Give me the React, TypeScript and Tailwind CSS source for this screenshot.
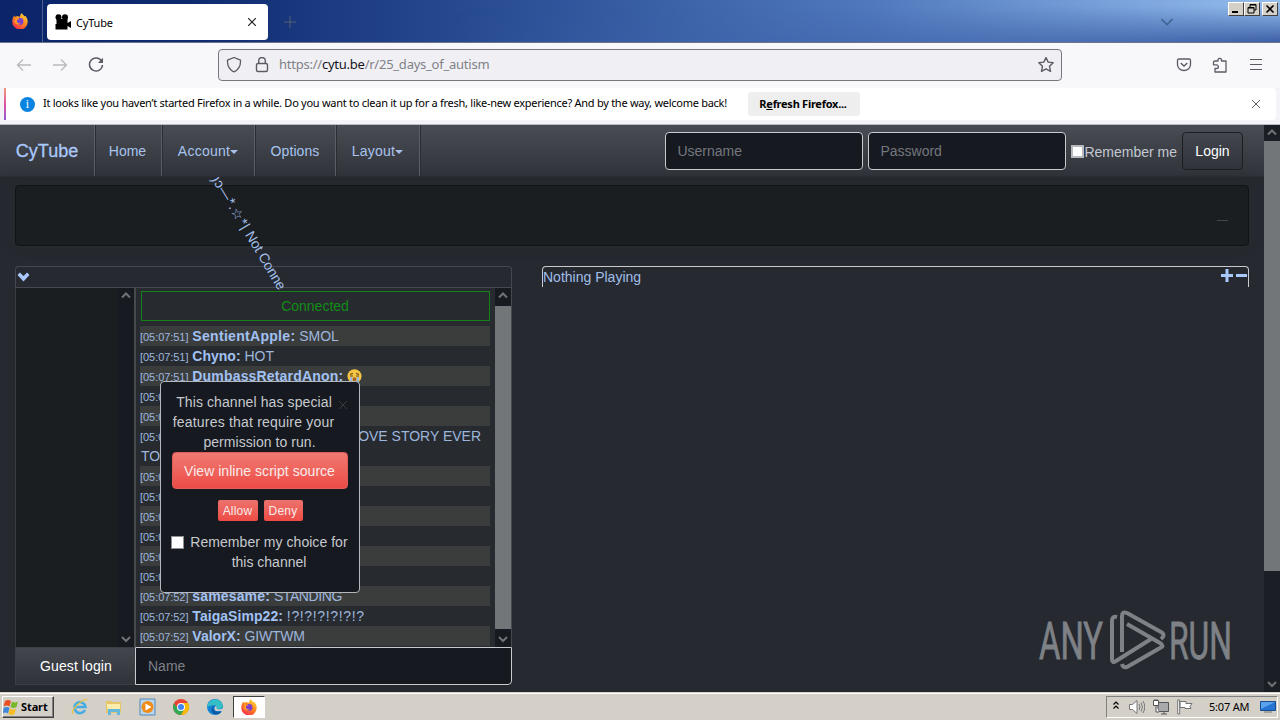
import * as React from "react";
import { type ReactNode } from "react";
import { clsx } from "clsx";

type Message = {
  time: string;
  user?: string;
  text?: ReactNode;
  tall?: boolean;
  className?: string;
};

const messages: Message[] = [
  { time: "05:07:51", user: "SentientApple", text: "SMOL", className: "tracking-[0.3px]" },
  { time: "05:07:51", user: "Chyno", text: "HOT" },
  { time: "05:07:51", user: "DumbassRetardAnon", text: <CryingFace />, className: "tracking-[0.17px]" },
  { time: "05:07:51" },
  { time: "05:07:51" },
  { time: "05:07:51", tall: true },
  { time: "05:07:52" },
  { time: "05:07:52" },
  { time: "05:07:52" },
  { time: "05:07:52" },
  { time: "05:07:52" },
  { time: "05:07:52" },
  {
    time: "05:07:52",
    user: "samesame",
    text: <span className="tracking-[-0.4px]">STANDING</span>,
    className: "tracking-[0.15px]",
  },
  {
    time: "05:07:52",
    user: "TaigaSimp22",
    text: <span className="tracking-[0.65px]">!?!?!?!?!?!?</span>,
    className: "tracking-[0.05px]",
  },
  { time: "05:07:52", user: "ValorX", text: <span className="tracking-[-0.2px]">GIWTWM</span> },
];

function CryingFace() {
  return (
    <svg className="inline-block h-[15px] w-[15px] align-[-3px]" viewBox="0 0 15 15">
      <circle cx="7.5" cy="7.2" r="7" fill="#f6c544" />
      <path d="M3 5.5l3-1.3M12 5.5L9 4.200M3 7h3M9 7h3" stroke="#6b4a12" strokeWidth="1.100" />
      <ellipse cx="7.5" cy="10.500" rx="1.800" ry="2.200" fill="#a8641c" />
      <path d="M3.200 8h2v6h-2zM9.800 8h2v6h-2z" fill="#8fb7ea" />
    </svg>
  );
}

function FirefoxIcon({ className }: { className?: string }) {
  return (
    <svg className={className} viewBox="0 0 16 16">
      <defs>
        <linearGradient id="fx" x1="0.8" y1="0" x2="0.2" y2="1">
          <stop offset="0" stopColor="#ffdc3e" />
          <stop offset="0.45" stopColor="#ff8a1f" />
          <stop offset="1" stopColor="#f5264f" />
        </linearGradient>
      </defs>
      <path
        d="M10 0c.3 1.700 1.600 2.300 2.700 3.300.3-.1.500-.2.700-.2 1.400 1.600 2.500 4 2.300 6A7.700 7.700 0 0 1 .3 8.600C.2 6 1.200 4 2.300 2.400l.7 1.500 2-.8C6.500 3.200 8 4 8 4 8 2.500 8.700 1 10 0z"
        fill="url(#fx)"
      />
      <circle cx="8" cy="8.500" r="3.400" fill="#7b3fd0" />
      <path d="M3.500 5.500c1.500-.7 3-.3 4 .8-1.800.1-2.500.7-2.600 1.800 0 1.800 2 3 4.400 2.100-2 2.300-6.300 1.500-6.800-1.700z" fill="#ff9a27" />
    </svg>
  );
}

function NavItem({ children, className, caret }: { children: ReactNode; className?: string; caret?: boolean }) {
  return (
    <a
      className={clsx(
        "flex h-full items-center justify-center border-r border-[#5b5e66] shadow-[1px_0_0_#2b2d33]",
        className,
      )}
    >
      {children}
      {caret && (
        <span className="mt-0.5 h-0 w-0 border-x-4 border-t-4 border-x-transparent border-t-[#a5bfe9]" />
      )}
    </a>
  );
}

function Arrow({ up, className }: { up?: boolean; className?: string }) {
  return (
    <svg className={clsx("h-4 w-4", className)} viewBox="0 0 16 16" fill="none">
      <path d={up ? "M4 9.500L8 5.500l4 4" : "M4 6l4 4 4-4"} stroke="#707276" strokeWidth="2" />
    </svg>
  );
}

function TitleBar() {
  return (
    <div className="relative flex h-[43px] shrink-0 border-b border-[#6d7489] bg-[linear-gradient(90deg,#0b246a_0%,#0f2b70_15%,#2c4f95_40%,#5079bd_68%,#80a8df_90%,#94bdec_100%)]">
      <div className="absolute inset-0 bg-[linear-gradient(90deg,transparent_35%,#3d5fa6_100%)] [mask-image:linear-gradient(180deg,transparent_15%,black_100%)]" />
      <div className="relative flex w-[43px] items-center justify-center border-r border-[#4c5f92]">
        <FirefoxIcon className="mr-0.5 h-4 w-4" />
      </div>
      <div className="relative mt-1 ml-1 flex h-9 w-[221px] items-center rounded bg-white">
        <svg className="ml-2 h-4 w-4" viewBox="0 0 16 16">
          <circle cx="3.500" cy="3.200" r="3" />
          <circle cx="10" cy="3.200" r="3" />
          <path d="M1.500 5h11v4l3.500-2v7l-3.500-2v3.500H.5V10h1z" />
        </svg>
        <span className="ml-[5px] pt-0.5 font-['Noto_Sans',sans-serif] text-[11px] tracking-[-0.2px] text-black">CyTube</span>
        <svg className="ml-auto mr-3 h-2 w-2" viewBox="0 0 8 8">
          <path d="M0 0l8 8M8 0L0 8" stroke="#222" strokeWidth="1.200" />
        </svg>
      </div>
      <svg className="relative mt-4 ml-4 h-3 w-3" viewBox="0 0 12 12">
        <path d="M6 0v12M0 6h12" stroke="#535f72" />
      </svg>
      <svg className="relative mt-[18px] ml-auto mr-[107px] h-2 w-3" viewBox="0 0 12 8" fill="none">
        <path d="M.5 1L6 6.500 11.500 1" stroke="#416494" strokeWidth="1.600" />
      </svg>
      <div className="absolute top-0.5 right-0.5 flex">
        {["min", "restore", "close"].map((name) => (
          <svg
            key={name}
            className={clsx(
              "h-[14px] border border-t-white border-r-[#404040] border-b-[#404040] border-l-white bg-[#d4d0c8]",
              name === "close" ? "ml-0.5 w-4" : "w-4",
            )}
            viewBox="0 0 14 12"
            fill="none"
            stroke="#000"
          >
            {name === "min" && <path d="M3 9h6" strokeWidth="2" />}
            {name === "restore" && <path d="M5 4V1.500h6V7H9M3 4.500h6V10H3zM5 2h6M3 5h6" />}
            {name === "close" && <path d="M3.500 2.500l7 7M10.500 2.500l-7 7" strokeWidth="1.600" />}
          </svg>
        ))}
      </div>
    </div>
  );
}

function Toolbar() {
  return (
    <div className="flex h-[45px] shrink-0 items-center bg-[#f8f8fa] pb-0.5 text-[#5b5b66]">
      <svg className="ml-4 h-4 w-4" viewBox="0 0 16 16" fill="none" stroke="#b9b9be" strokeWidth="1.300">
        <path d="M15 8H1.500M7 2.500L1.500 8 7 13.500" />
      </svg>
      <svg className="ml-5 h-4 w-4" viewBox="0 0 16 16" fill="none" stroke="#b9b9be" strokeWidth="1.300">
        <path d="M1 8h13.500M9 2.500L14.500 8 9 13.500" />
      </svg>
      <svg className="ml-5 h-4 w-4" viewBox="0 0 16 16" fill="none" stroke="currentColor" strokeWidth="1.500">
        <path d="M13.800 4.500A6.500 6.500 0 1 0 14.500 8" />
        <path d="M15 .8V6h-5z" fill="currentColor" stroke="none" />
      </svg>
      <div className="ml-[114px] flex h-8 w-[844px] items-center rounded border border-[#77777d] bg-[#f0f0f4]">
        <svg className="ml-[7px] h-4 w-4" viewBox="0 0 16 16" fill="none" stroke="currentColor" strokeWidth="1.300">
          <path d="M8 .5l6.500 2.700c.3 5-1.500 9.500-6.500 11.700C3 12.700 1.200 8.200 1.500 3.200z" strokeLinejoin="round" />
        </svg>
        <svg className="ml-3 h-4 w-4" viewBox="0 0 16 16" fill="none" stroke="currentColor" strokeWidth="1.400">
          <rect x="2.500" y="6.500" width="11" height="8" rx="1.500" />
          <path d="M4.700 6.500V3.800a3.300 3.300 0 0 1 6.600 0v2.700" />
        </svg>
        <span className="ml-[9px] font-['Noto_Sans',sans-serif] text-[13px] tracking-[-0.24px] text-[#808087]">
          https://<span className="text-[#15141a]">cytu.be</span>/r/25_days_of_autism
        </span>
        <svg className="ml-auto mr-[7px] h-4 w-4" viewBox="0 0 16 16" fill="none" stroke="currentColor" strokeWidth="1.400">
          <path d="M8 .6l2.200 4.500 5 .6-3.700 3.500 1 5.200L8 11.900l-4.500 2.500 1-5.200L.8 5.700l5-.6z" strokeLinejoin="round" />
        </svg>
      </div>
      <svg className="ml-[114px] h-4 w-4" viewBox="0 0 16 16" fill="none" stroke="currentColor" strokeWidth="1.300">
        <path d="M3 2h10q1.500 0 1.500 1.500v4a6.500 6 0 0 1-13 0v-4Q1.500 2 3 2z" />
        <path d="M4.700 6L8 9l3.300-3" />
      </svg>
      <svg className="ml-5 h-4 w-4" viewBox="0 0 16 16" fill="none" stroke="currentColor" strokeWidth="1.300">
        <path d="M6 4V2.500a2 2 0 0 1 3.500 0V4h4.500v11H3v-3.500h1.500a1.800 1.800 0 0 0 0-3.700H1.500V5.500Q1.500 4 3 4z" strokeLinejoin="round" />
      </svg>
      <svg className="ml-5 h-4 w-4" viewBox="0 0 16 16" stroke="currentColor" strokeWidth="1.200">
        <path d="M2 2.500h12M2 7.500h12M2 12.500h12" />
      </svg>
    </div>
  );
}

function InfoBar() {
  return (
    <div className="flex h-[37px] shrink-0 border-b border-[#bcbcc6] bg-[#f4f4f8] pb-1 font-['Noto_Sans',sans-serif] text-[11px] text-black">
      <div className="ml-1 flex w-[1272px] items-center rounded-r bg-white">
        <div className="h-full w-0.5 bg-linear-to-b from-[#f09a80] via-[#e050a0] to-[#9059d0]" />
        <div className="ml-[14px] flex h-[15px] w-[15px] items-center justify-center rounded-full bg-[#0a84e0] font-['Liberation_Serif',serif] text-[12px] text-white">
          i
        </div>
        <span className="ml-2 w-[690px] whitespace-nowrap pb-0.5 tracking-[-0.268px]">
          It looks like you haven’t started Firefox in a while. Do you want to clean it up for a fresh, like-new
          experience? And by the way, welcome back!
        </span>
        <button className="ml-[15px] h-6 w-28 rounded bg-[#eeeeef] pr-0.5 text-[11px] font-bold tracking-[-0.26px]">
          R<u>e</u>fresh Firefox...
        </button>
        <svg className="ml-auto mr-4 h-2 w-2" viewBox="0 0 8 8">
          <path d="M0 0l8 8M8 0L0 8" stroke="#5b5b66" />
        </svg>
      </div>
    </div>
  );
}

function Navbar() {
  return (
    <nav className="flex h-[52px] shrink-0 items-center border-b border-[#2c2e33] bg-linear-to-b from-[#494c54] to-[#303339] text-[#a8c4ee]">
      <NavItem className="w-[95px] text-[18px] text-[#a9c8fb] [-webkit-text-stroke:0.3px_#a9c8fb]">CyTube</NavItem>
      <NavItem className="w-[67px] pr-px">Home</NavItem>
      <NavItem className="w-[93px] tracking-[0.25px]" caret>Account</NavItem>
      <NavItem className="w-[81px] tracking-[0.1px]">Options</NavItem>
      <NavItem className="w-[84px] tracking-[0.25px]" caret>Layout</NavItem>
      <div className="ml-auto mr-[21px] flex items-center">
        <div className="flex h-[38px] w-[198px] items-center rounded border border-[#c8cacf] bg-[#161920] px-[11px] text-[#74777e]">
          Username
        </div>
        <div className="ml-[5px] flex h-[38px] w-[198px] items-center rounded border border-[#c8cacf] bg-[#161920] px-[11px] text-[#74777e]">
          Password
        </div>
        <span className="mt-0.5 ml-[5px] h-[13px] w-[13px] border-2 border-[#b8b9be] bg-white" />
        <span className="mt-0.5 text-[#c3c8d2]">Remember me</span>
        <button className="ml-[5px] h-[38px] w-[61px] rounded border border-[#1b1d21] bg-linear-to-b from-[#43464e] to-[#303339] text-white">
          Login
        </button>
      </div>
    </nav>
  );
}

function ChatRow({ message, index }: { message: Message; index: number }) {
  return (
    <div className={clsx("w-[350px] shrink-0 leading-5", message.tall ? "h-10" : "h-5", index % 2 === 0 && "bg-[#3b3d3d]")}>
      <span className="text-[11px] leading-none tracking-[-0.05px]">[{message.time}]</span>{" "}
      {message.user && <strong className={clsx("text-[#a2c1f3]", message.className)}>{message.user}:</strong>}{" "}
      {message.text}
      {message.tall && (
        <>
          <span className="ml-[158px]">LOVE STORY EVER</span>
          <br />
          <span className="ml-px">TOLD</span>
        </>
      )}
    </div>
  );
}

function Chat() {
  return (
    <section className="w-[497px]">
      <div className="flex h-[21px] items-center rounded-t border border-b-0 border-[#44474f] pl-px">
        <svg className="h-3 w-[13px]" viewBox="0 0 12 12">
          <path d="M0 4l2.400-2.500L6 5l3.600-3.500L12 4l-6 6.500z" fill="#a9c8fb" />
        </svg>
      </div>
      <div className="flex h-[360px] border-t border-[#46494f]">
        <div className="flex w-[119px] border-l border-[#383b40] bg-[#1b1e20]">
          <div className="ml-auto flex w-4 flex-col justify-between bg-[#171a20]">
            <Arrow up />
            <Arrow />
          </div>
        </div>
        <div className="flex w-[361px] flex-col overflow-hidden border-l-2 border-[#47494d] bg-[#272b2f] pt-[3px] pl-1">
          <div className="mb-[5px] ml-px flex h-[30px] w-[349px] shrink-0 items-center justify-center border border-[#148018] pr-px text-[#118d15]">
            Connected
          </div>
          {messages.map((message, index) => (
            <ChatRow key={index} message={message} index={index} />
          ))}
        </div>
        <div className="flex w-4 flex-col bg-[#171a20]">
          <Arrow up />
          <div className="my-0.5 flex-1 bg-[#737679]" />
          <Arrow />
        </div>
        <div className="w-px bg-[#46494f]" />
      </div>
      <div className="flex h-[38px]">
        <button className="w-[120px] border border-[#3b3e45] bg-linear-to-b from-[#43464e] to-[#303339] pl-0.5 tracking-[0.1px] text-white">
          Guest login
        </button>
        <div className="flex flex-1 items-center rounded-br border border-[#c8cacf] bg-[#161920] pl-3 text-[#7d8087]">Name</div>
      </div>
    </section>
  );
}

function PermissionDialog() {
  return (
    <div className="absolute top-[256px] left-[160px] flex h-[212px] w-[200px] flex-col items-center rounded border border-[#b4b7bd] bg-[#161920] text-center leading-5 text-[#c6c9ce]">
      <svg className="absolute top-[19px] left-[178px] h-2 w-2" viewBox="0 0 8 8">
        <path d="M0 0l8 8M8 0L0 8" stroke="#3a3d42" />
      </svg>
      <p className="mt-[10px] w-[186px] pr-[13px]">
        <span className="ml-px tracking-[0.1px]">This channel has special</span>
        <br />
        <span className="tracking-[0.2px]">features that require your</span>
        <br />
        <span className="ml-[12px] tracking-[0.05px]">permission to run.</span>
      </p>
      <button className="ml-[-1px] h-[37px] w-[176px] rounded-sm border border-[#e35d58] bg-linear-to-b from-[#ee7972] to-[#ee4a45] tracking-[0.04px] text-[#f9eaea]">
        View inline script source
      </button>
      <div className="mt-[11px] flex gap-[6px] text-[12px] text-[#f9eaea]">
        <button className="h-[21px] w-10 rounded-xs bg-linear-to-b from-[#ec726c] to-[#ee4a45] tracking-[0.2px]">Allow</button>
        <button className="h-[21px] w-[39px] rounded-xs bg-linear-to-b from-[#ec726c] to-[#ee4a45] tracking-[0.2px]">Deny</button>
      </div>
      <div className="mt-[11px] flex w-[178px]">
        <span className="mt-1 h-[13px] w-[13px] shrink-0 border border-[#8d8f93] bg-white" />
        <p className="ml-[5px] w-[170px] whitespace-nowrap">
          <span className="tracking-[0.04px]">Remember my choice for</span>
          <br />
          this channel
        </p>
      </div>
    </div>
  );
}

function Watermark() {
  return (
    <svg
      className="absolute top-[478px] left-[1036px] h-[72px] w-[200px]"
      viewBox="0 -2 200 72"
      fill="none"
      stroke="#7e8185"
      strokeWidth="4"
    >
      <g fill="#7e8185" stroke="#7e8185" strokeWidth="0.8" fontFamily="Roboto, sans-serif" fontSize="51">
        <text x="3" y="54" textLength="64" lengthAdjust="spacingAndGlyphs">ANY</text>
        <text x="133" y="54" textLength="63" lengthAdjust="spacingAndGlyphs">RUN</text>
      </g>
      <path d="M81 12q-5-1-5 3.500v39q0 4 4 1.500l35-22" strokeLinejoin="round" />
      <path d="M86 47V11q0-5 5-3l34 19q5 3 0 7" strokeLinejoin="round" />
      <path d="M91 19l33 19q5 3 0 5L91 62q-4 1-5-3" strokeLinejoin="round" />
    </svg>
  );
}

function Page() {
  return (
    <div className="relative flex h-[567px] shrink-0 overflow-hidden bg-[#262930] font-['Liberation_Sans',Arial,sans-serif] text-[14px] leading-5 text-[#9db6dd]">
      <div className="flex w-[1264px] flex-col">
        <Navbar />
        <div className="mt-2 ml-[15px] flex h-[61px] w-[1234px] items-center justify-end rounded-sm border border-[#111416] bg-[#1b1e20] shadow-[0_0_12px_#292c2c]">
          <div className="mt-[10px] mr-5 h-px w-[11px] bg-[#44474a]" />
        </div>
        <div className="mt-5 ml-[15px] flex gap-[30px]">
          <Chat />
          <section className="flex h-[21px] w-[707px] items-center rounded-t border border-b-0 border-[#c8cacf] text-[#a2bfe9]">
            Nothing Playing
            <svg className="mb-[3px] ml-auto h-[13px] w-[28px]" viewBox="0 0 28 13">
              <path d="M5.500 0h3v5h4.500v3H8.500v5h-3V8H1V5h4.500zM16 5h11v3H16z" fill="#a9c8fb" />
            </svg>
          </section>
        </div>
      </div>
      <div className="flex w-4 flex-col bg-[#1b1e25]">
        <Arrow up />
        <div className="h-[430px] bg-[#737679]" />
        <Arrow className="mt-auto" />
      </div>
      {/* spinning chat title, its top goes under the navbar */}
      <div className="absolute top-[52px] left-[190px] h-[125px] w-[120px] overflow-hidden">
        <div className="absolute top-[-6px] left-[34px] origin-top-left rotate-[59deg] whitespace-pre text-[#a2bfe9]">
          <span className="tracking-[0.5px]">)ɔ—*.☆*| </span>
          <span className="tracking-[-0.2px]">Not Conne</span>
        </div>
      </div>
      <PermissionDialog />
      <Watermark />
    </div>
  );
}

function Taskbar() {
  return (
    <div className="flex h-7 shrink-0 items-center border-t border-[#d4d0c8] bg-[#d4d0c8] pt-px font-['Noto_Sans',sans-serif] text-[11px] text-black shadow-[inset_0_1px_0_#fff]">
      <button className="ml-0.5 flex h-[22px] w-[52px] items-center border border-t-white border-r-[#404040] border-b-[#404040] border-l-white font-bold tracking-[-0.1px] shadow-[inset_-1px_-1px_0_#808080]">
        <svg className="h-4 w-4 shrink-0" viewBox="0 0 16 16">
          <path d="M2 2q3-2 6 0L6.500 7.500q-3-2-6 0z" fill="#e85024" />
          <path d="M9 2.500q3 2 6 0L13.500 8q-3 2-6 0z" fill="#76b82a" />
          <path d="M.5 9q3-2 6 0L5 14.500q-3-2-5 0z" fill="#3f87d9" />
          <path d="M7 9.500q3 2 6 0L11.500 15q-3 2-6 0z" fill="#f7bd23" />
        </svg>
        <span className="ml-0.5">Start</span>
      </button>
      <svg className="ml-[17px] h-[18px] w-[18px]" viewBox="0 0 18 18" fill="none">
        <path d="M14 12a5.500 5.500 0 1 1 .5-3H5" stroke="#45ace4" strokeWidth="2.600" />
        <path d="M2 16C-1 12 12 0 16.500 2" stroke="#e5c348" strokeWidth="1.300" />
      </svg>
      <svg className="ml-4 h-[18px] w-[18px]" viewBox="0 0 18 18">
        <path d="M1 3h6l1 1h8v11H1z" fill="#e6c66a" />
        <path d="M2 6h13v5H2z" fill="#faecaa" />
        <path d="M3 11h12v6h-3v-3H6v3H3z" fill="#65b8dc" />
      </svg>
      <svg className="ml-4 h-[18px] w-[18px]" viewBox="0 0 18 18">
        <path d="M1 1h15v16H1z" fill="#b9d5ec" stroke="#5588b7" />
        <circle cx="8.500" cy="9" r="6" fill="#f18b17" />
        <path d="M6.500 5.500v7l6-3.500z" fill="#fff" />
      </svg>
      <svg className="ml-4 h-4 w-4" viewBox="0 0 16 16">
        <circle cx="8" cy="8" r="8" fill="#e84335" />
        <path d="M1.100 4A8 8 0 0 0 8 16l3.500-6L8 8H3.500z" fill="#35a853" />
        <path d="M8 16a8 8 0 0 0 7-12H8l3.500 6z" fill="#fabc05" />
        <circle cx="8" cy="8" r="4" fill="#fff" />
        <circle cx="8" cy="8" r="3" fill="#4285f4" />
      </svg>
      <svg className="ml-[18px] h-4 w-4" viewBox="0 0 16 16">
        <circle cx="8" cy="8" r="8" fill="#1685d1" />
        <path d="M0 8C1 1 11-3 15.500 5c1 4-2 6-6 5 1-2 0-4-2.500-4S2 7 0 8z" fill="#35bfc4" />
        <path d="M7.500 7c-3 3 0 7 7 5.500C12 17 5 16 4.500 12 4 9 6 7 7.500 7z" fill="#0e5aa9" />
        <path d="M9 7c1.500 1 0 2.500 1 3 3 1 5 0 6-1v3H9c-2-1-2-4 0-5z" fill="#d4d0c8" />
      </svg>
      <div className="ml-2.5 flex h-[22px] w-8 items-center justify-center border border-t-[#404040] border-r-white border-b-white border-l-[#404040] bg-white">
        <FirefoxIcon className="h-4 w-4" />
      </div>
      <div className="mr-0.5 ml-auto flex h-[22px] w-[172px] items-center border border-t-[#808080] border-r-white border-b-white border-l-[#808080]">
        <svg className="mb-1 ml-[6px] h-2 w-[6px]" viewBox="0 0 6 8" fill="none" stroke="#000" strokeWidth="1.200">
          <path d="M.5 3.500L3 1l2.500 2.500M.5 7.500L3 5l2.500 2.500" />
        </svg>
        <svg className="ml-[10px] h-4 w-4" viewBox="0 0 16 16" fill="none" stroke="#76777b">
          <path d="M.5 5.500h3L8 1.500v13l-4.500-4h-3z" fill="#fff" />
          <path d="M10 5q2 3 0 6M12 3.500q3 4.500 0 9M14 2q3.500 6 0 12" />
        </svg>
        <svg className="ml-2 h-4 w-4" viewBox="0 0 16 16" stroke="#55575a">
          <path d="M5 3.500h10.500v9H5zM8 15h6M11 12v3" fill="#a7a9aa" />
          <path d="M.5 1.500h5v5h-5zM3 7v6h3M2 0v2M4 0v2" fill="#fff" />
        </svg>
        <svg className="ml-2 h-4 w-4" viewBox="0 0 16 16" stroke="#707276">
          <path d="M.7 1h2v14h-2zM3 2.500h6v2h6l-2 3 1 2H8v-1H3z" fill="#fff" />
        </svg>
        <span className="ml-4 whitespace-nowrap tracking-[-0.2px]">5:07 AM</span>
        <svg className="mr-px ml-auto h-3 w-4" viewBox="0 0 16 12">
          <path d="M.5.5h15v9H.5z" fill="#2674d2" stroke="#174c91" />
          <path d="M1 1h14L1 8z" fill="#5aa2ec" />
          <path d="M4 11h8" stroke="#777" />
        </svg>
      </div>
    </div>
  );
}

export default function App() {
  return (
    <div className="flex h-[720px] w-[1280px] flex-col overflow-hidden">
      <TitleBar />
      <Toolbar />
      <InfoBar />
      <Page />
      <Taskbar />
    </div>
  );
}
